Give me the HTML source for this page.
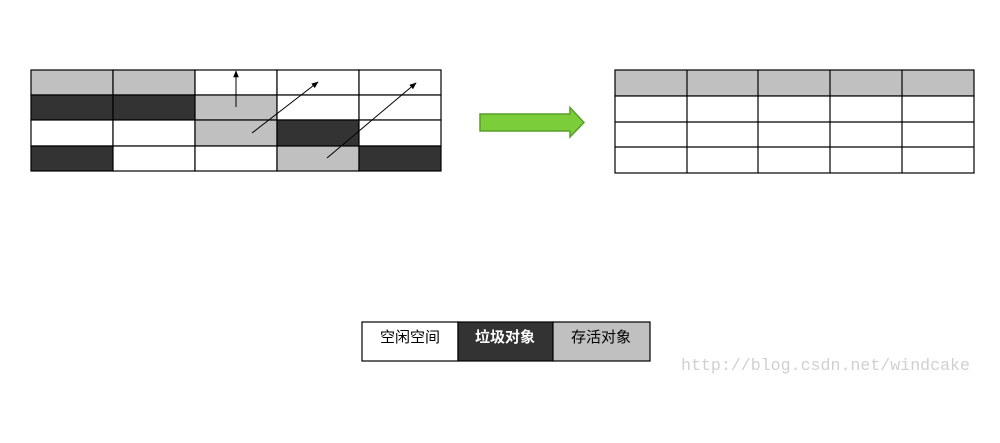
<!DOCTYPE html>
<html><head><meta charset="utf-8"><style>
html,body{margin:0;padding:0;background:#fff;width:1000px;height:443px;overflow:hidden}
svg{display:block}
text{font-family:"Liberation Sans","Noto Sans CJK SC",sans-serif}
</style></head><body>
<svg width="1000" height="443" viewBox="0 0 1000 443" xmlns="http://www.w3.org/2000/svg">
<defs><marker id="ah" viewBox="0 0 10 10" refX="9" refY="5" markerWidth="7" markerHeight="7" orient="auto"><path d="M0,1 L10,5 L0,9 Z" fill="#000"/></marker></defs>
<g stroke="#000" stroke-width="1.2">
<rect x="31" y="70" width="82" height="25" fill="#c0c0c0"/>
<rect x="113" y="70" width="82" height="25" fill="#c0c0c0"/>
<rect x="195" y="70" width="82" height="25" fill="#fff"/>
<rect x="277" y="70" width="82" height="25" fill="#fff"/>
<rect x="359" y="70" width="82" height="25" fill="#fff"/>
<rect x="31" y="95" width="82" height="25" fill="#333"/>
<rect x="113" y="95" width="82" height="25" fill="#333"/>
<rect x="195" y="95" width="82" height="25" fill="#c0c0c0"/>
<rect x="277" y="95" width="82" height="25" fill="#fff"/>
<rect x="359" y="95" width="82" height="25" fill="#fff"/>
<rect x="31" y="120" width="82" height="26" fill="#fff"/>
<rect x="113" y="120" width="82" height="26" fill="#fff"/>
<rect x="195" y="120" width="82" height="26" fill="#c0c0c0"/>
<rect x="277" y="120" width="82" height="26" fill="#333"/>
<rect x="359" y="120" width="82" height="26" fill="#fff"/>
<rect x="31" y="146" width="82" height="25" fill="#333"/>
<rect x="113" y="146" width="82" height="25" fill="#fff"/>
<rect x="195" y="146" width="82" height="25" fill="#fff"/>
<rect x="277" y="146" width="82" height="25" fill="#c0c0c0"/>
<rect x="359" y="146" width="82" height="25" fill="#333"/>
</g>
<g stroke="#000" stroke-width="1" marker-end="url(#ah)">
<line x1="236" y1="107" x2="236" y2="71"/>
<line x1="252" y1="133" x2="318" y2="82"/>
<line x1="327" y1="158" x2="416" y2="83"/>
</g>
<path d="M480,114 H570 V107.5 L584,122.5 L570,137 V131 H480 Z" fill="#7ccd3a" stroke="#5a9f28" stroke-width="1.5"/>
<g stroke="#000" stroke-width="1.2" fill="#fff">
<rect x="615" y="70" width="359" height="26" fill="#c0c0c0"/>
<rect x="615" y="96" width="359" height="77"/>
<line x1="615" y1="122" x2="974" y2="122"/>
<line x1="615" y1="147" x2="974" y2="147"/>
<line x1="687" y1="70" x2="687" y2="173"/>
<line x1="758" y1="70" x2="758" y2="173"/>
<line x1="830" y1="70" x2="830" y2="173"/>
<line x1="902" y1="70" x2="902" y2="173"/>
</g>
<g stroke="#000" stroke-width="1.2">
<rect x="362" y="322" width="96" height="39" fill="#fff"/>
<rect x="458" y="322" width="95" height="39" fill="#333"/>
<rect x="553" y="322" width="97" height="39" fill="#c0c0c0"/>
</g>
<g font-size="15" text-anchor="middle">
<text x="410" y="342" fill="#000">空闲空间</text>
<text x="505" y="342" fill="#fff" font-weight="bold">垃圾对象</text>
<text x="601" y="342" fill="#000">存活对象</text>
</g>
<text x="681" y="370" font-size="17" fill="#d0d0d0" textLength="289" lengthAdjust="spacingAndGlyphs" style="font-family:'Liberation Mono',monospace">http://blog.csdn.net/windcake</text>
</svg>
</body></html>
